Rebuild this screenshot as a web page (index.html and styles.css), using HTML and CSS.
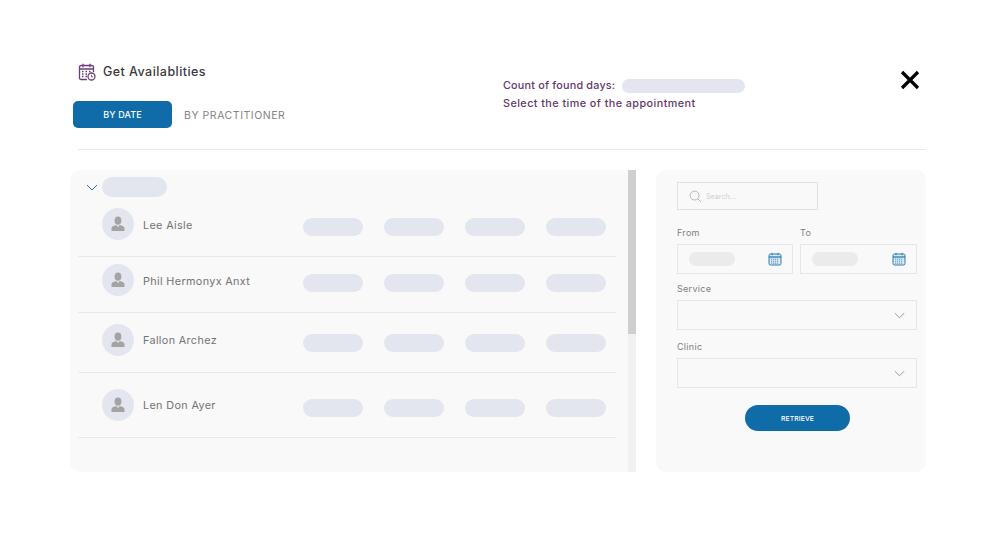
FILE: index.html
```html
<!DOCTYPE html>
<html lang="en">
<head>
<meta charset="utf-8">
<title>Get Availablities</title>
<link rel="stylesheet" href="styles.css">
</head>
<body>
<svg class="defs" width="0" height="0" aria-hidden="true">
  <symbol id="person" viewBox="0 0 16 16">
    <ellipse cx="8" cy="4.6" rx="3.4" ry="4.2" fill="#a3a3a3"/>
    <path d="M1.5 15v-2.600c0-1.500 1-2.300 2.400-2.700l2.300-.6L8 11l1.800-1.900 2.300.6c1.400.4 2.400 1.200 2.400 2.700V15z" fill="#a3a3a3"/>
  </symbol>
  <symbol id="cal" viewBox="0 0 14 14">
    <rect x="1" y="2" width="12" height="11" rx="1.500" fill="#dde8f0" stroke="#2a7cb0" stroke-width="1"/>
    <path d="M1 5h12" stroke="#2a7cb0" stroke-width="1.300"/>
    <path d="M4 .8v2.400M10 .8v2.400" stroke="#2a7cb0" stroke-width="1"/>
    <path d="M3 7.200h8M3 9.200h8M3 11.200h8" stroke="#4a8fbc" stroke-width=".9" stroke-dasharray="1.200 .8"/>
  </symbol>
  <symbol id="chev" viewBox="0 0 12 7">
    <path d="M1 1l5 5 5-5" fill="none" stroke="currentColor" stroke-width="1"/>
  </symbol>
</svg>
<main class="page">
  <header class="top">
    <div class="top-left">
      <div class="title-row">
        <svg class="title-icon" viewBox="0 0 18 18" aria-hidden="true">
          <path d="M9 16.500H3a1.500 1.500 0 0 1-1.500-1.500V4A1.500 1.500 0 0 1 3 2.500h11A1.500 1.500 0 0 1 15.500 4v5" fill="none" stroke="#6b3f78" stroke-width="1.300"/>
          <path d="M5 .8v3.400M12 .8v3.400M2 6h13" stroke="#6b3f78" stroke-width="1.300"/>
          <path d="M4 8.500h1.500M7.500 8.500H9M11 8.500h1.500M4 11h1.500M7.500 11H9M4 13.500h1.500M7.500 13.500H9" stroke="#6b3f78" stroke-width="1.300"/>
          <circle cx="13.500" cy="13.500" r="3.500" fill="#fff" stroke="#6b3f78" stroke-width="1.300"/>
          <path d="M13.500 11.800v1.900h1.500" fill="none" stroke="#6b3f78" stroke-width=".9"/>
        </svg>
        <h1 class="title">Get Availablities</h1>
      </div>
      <nav class="tabs">
        <button class="tab tab-active">BY DATE</button>
        <button class="tab tab-plain"><span class="tab-text">BY PRACTITIONER</span></button>
      </nav>
    </div>
    <div class="info">
      <div class="info-line"><span class="info-text">Count of found days:</span><span class="pill pill-count"></span></div>
      <div class="info-line info-second"><span class="info-text">Select the time of the appointment</span></div>
    </div>
    <svg class="close" viewBox="0 0 20 20" aria-label="Close">
      <path d="M2 2l16 16M18 2L2 18" stroke="#000" stroke-width="3.200" fill="none"/>
    </svg>
  </header>
  <hr class="divider">
  <section class="content">
    <div class="list-panel">
      <div class="list">
        <div class="group">
          <svg class="group-chev"><use href="#chev"/></svg>
          <span class="pill pill-group"></span>
        </div>
        <div class="row row-1">
          <span class="avatar"><svg class="person"><use href="#person"/></svg></span>
          <span class="name">Lee Aisle</span>
          <span class="slots"><i class="pill slot"></i><i class="pill slot"></i><i class="pill slot"></i><i class="pill slot"></i></span>
        </div>
        <div class="row row-2">
          <span class="avatar"><svg class="person"><use href="#person"/></svg></span>
          <span class="name">Phil Hermonyx Anxt</span>
          <span class="slots"><i class="pill slot"></i><i class="pill slot"></i><i class="pill slot"></i><i class="pill slot"></i></span>
        </div>
        <div class="row row-3">
          <span class="avatar"><svg class="person"><use href="#person"/></svg></span>
          <span class="name">Fallon Archez</span>
          <span class="slots"><i class="pill slot"></i><i class="pill slot"></i><i class="pill slot"></i><i class="pill slot"></i></span>
        </div>
        <div class="row row-4">
          <span class="avatar"><svg class="person"><use href="#person"/></svg></span>
          <span class="name">Len Don Ayer</span>
          <span class="slots"><i class="pill slot"></i><i class="pill slot"></i><i class="pill slot"></i><i class="pill slot"></i></span>
        </div>
      </div>
      <div class="scrollbar"><div class="thumb"></div></div>
    </div>
    <aside class="filter">
      <div class="search">
        <svg class="search-icon" viewBox="0 0 14 14" aria-hidden="true">
          <circle cx="6" cy="6" r="4.800" fill="none" stroke="#a8a8a8" stroke-width=".9"/>
          <path d="M9.500 9.500l3.500 3.500" stroke="#a8a8a8" stroke-width=".9"/>
        </svg>
        <span class="search-text">Search...</span>
      </div>
      <div class="dates">
        <div class="date-col date-from">
          <label class="label">From</label>
          <div class="field date-field"><span class="pill date-pill"></span><svg class="cal"><use href="#cal"/></svg></div>
        </div>
        <div class="date-col date-to">
          <label class="label">To</label>
          <div class="field date-field"><span class="pill date-pill"></span><svg class="cal"><use href="#cal"/></svg></div>
        </div>
      </div>
      <label class="label label-service">Service</label>
      <div class="field select"><svg class="select-chev"><use href="#chev"/></svg></div>
      <label class="label label-clinic">Clinic</label>
      <div class="field select"><svg class="select-chev"><use href="#chev"/></svg></div>
      <button class="retrieve">RETRIEVE</button>
    </aside>
  </section>
</main>
</body>
</html>
```

FILE: styles.css
```css
* { box-sizing: border-box; }
html, body { margin: 0; padding: 0; background: #fff; }
body { font-family: "Inter", "Liberation Sans", sans-serif; width: 1000px; height: 533px; overflow: hidden; }
.defs { position: absolute; }
.page { padding: 63px 74px 0 70px; }

.top { display: flex; height: 86px; }
.top-left { width: 433px; padding-left: 3px; }
.title-row { display: flex; align-items: center; height: 18px; padding-left: 5px; }
.title-icon { width: 18px; height: 18px; flex: none; }
.title { margin: 0 0 0 7px; font-size: 12.500px; font-weight: 500; color: #3a3a3a; letter-spacing: .45px; line-height: 18px; }
.tabs { display: flex; align-items: stretch; margin-top: 20px; height: 27px; }
.tab { border: 0; background: none; padding: 0; font: inherit; font-size: 10.500px; color: #858585; font-weight: 400; letter-spacing: .55px; margin-left: 12px; width: 103px; white-space: nowrap; text-align: left; }
.tab-text { position: relative; top: 1px; }
.tab-active { width: 99px; margin-left: 0; background: #0f6ca8; color: #fff; border-radius: 5px; text-align: center; font-size: 9px; font-weight: 500; letter-spacing: .1px; }

.info { width: 397px; padding-top: 16px; color: #5f3a6d; font-size: 10.800px; font-weight: 500; }
.info-line { display: flex; align-items: center; height: 14px; white-space: pre; letter-spacing: .2px; }
.info-text { margin-bottom: 2px; }
.info-second { margin-top: 4px; letter-spacing: .44px; }
.pill { display: block; background: #e3e6ee; border-radius: 999px; }
.pill-count { width: 123px; height: 14px; margin-left: 7px; }
.close { width: 20px; height: 20px; margin-top: 7px; flex: none; }

.divider { margin: 0 0 20px 8px; border: 0; border-top: 1px solid #e9e9e9; width: 848px; }

.content { display: flex; height: 302px; gap: 20px; }
.list-panel { width: 566px; background: #f9f9f9; border-radius: 10px 0 0 10px; display: flex; overflow: hidden; }
.list { width: 558px; padding: 7px 12px 0 8px; }
.scrollbar { width: 8px; background: #f1f1f1; }
.thumb { height: 164px; background: #cfcfcf; }

.group { display: flex; align-items: center; height: 20px; padding-left: 8px; }
.group-chev { width: 12px; height: 7px; color: #1f74ad; margin-right: 4px; }
.pill-group { width: 65px; height: 20px; }

.row { display: flex; align-items: flex-start; border-bottom: 1px solid #e9e9e9; padding-left: 24px; }
.row-1 { height: 60px; padding-top: 11px; }
.row-2 { height: 56px; padding-top: 7px; }
.row-3 { height: 60px; padding-top: 11px; }
.row-4 { height: 65px; padding-top: 16px; }
.avatar { width: 32px; height: 32px; border-radius: 50%; background: #e3e6ee; display: flex; align-items: center; justify-content: center; flex: none; }
.person { width: 16px; height: 16px; }
.name { width: 169px; padding-left: 9px; font-size: 10.800px; font-weight: 400; color: #737373; letter-spacing: .36px; line-height: 35px; white-space: nowrap; }
.row-3 .name, .row-4 .name { line-height: 33px; }
.slots { display: flex; gap: 21px; margin-top: 10px; }
.slot { width: 60px; height: 18px; }

.filter { width: 270px; background: #f9f9f9; border-radius: 10px; padding: 12px 9px 0 21px; display: flex; flex-direction: column; }
.search { width: 141px; height: 28px; border: 1px solid #e1e1e1; display: flex; align-items: center; padding-left: 11px; flex: none; }
.search-icon { width: 13px; height: 13px; }
.search-text { margin-left: 4px; font-size: 7px; color: #cfcfcf; letter-spacing: .1px; }
.label { display: block; font-size: 9px; color: #7f7f7f; font-weight: 400; line-height: 12px; letter-spacing: .3px; }
.dates { display: flex; gap: 7px; margin-top: 17px; }
.date-from { width: 116px; }
.date-to { width: 117px; }
.field { border: 1px solid #e6e6e6; }
.date-field { height: 30px; margin-top: 5px; display: flex; align-items: center; justify-content: space-between; padding: 0 10px 0 11px; }
.date-pill { width: 46px; height: 14px; background: #ebebeb; }
.cal { width: 14px; height: 14px; }
.label-service { margin-top: 9px; }
.label-clinic { margin-top: 11px; }
.select { width: 240px; height: 30px; margin-top: 5px; display: flex; align-items: center; justify-content: flex-end; padding-right: 11px; flex: none; }
.select-chev { width: 11px; height: 7px; color: #8f8f8f; }
.retrieve { width: 105px; height: 26px; margin: 17px 0 0 68px; border: 0; border-radius: 13px; background: #0f6ca8; color: #fff; font: inherit; font-size: 6.800px; font-weight: 500; letter-spacing: .1px; padding: 0; }
```
